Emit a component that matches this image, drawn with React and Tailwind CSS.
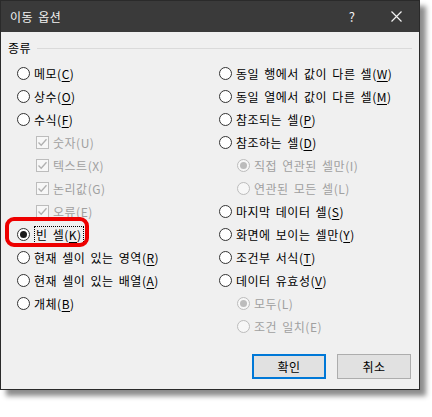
import React from "react";

const FONT = "font-['Noto_Sans_CJK_KR','Noto_Sans',sans-serif] tracking-[0.5px] [word-spacing:2px]";

function Label({ text, k, disabled }) {
  return (
    <span className={`text-[12px] leading-[16px] whitespace-nowrap ${disabled ? "text-[#a0a0a0]" : "text-black"}`}>
      {text}(
      <span className={disabled ? "" : "underline underline-offset-2 decoration-1"}>{k}</span>)
    </span>
  );
}

function Radio({ text, k, checked, disabled, indent, focus }) {
  const border = disabled ? "border-[#bcbcbc]" : "border-[#333333]";
  const bg = disabled ? "bg-[#f7f7f7]" : "bg-white";
  const dot = disabled ? "bg-[#bcbcbc]" : "bg-[#1a1a1a]";
  return (
    <div className={`h-[23px] flex items-center gap-[4px] ${indent ? "pl-[18px]" : ""}`}>
      <div className={`w-[13px] h-[13px] rounded-full border ${border} ${bg} flex items-center justify-center shrink-0`}>
        {checked && <div className={`w-[7px] h-[7px] rounded-full ${dot}`} />}
      </div>
      {focus ? (
        <span className="border border-dotted border-black px-[1px] leading-[14px] flex items-center">
          <Label text={text} k={k} disabled={disabled} />
        </span>
      ) : (
        <Label text={text} k={k} disabled={disabled} />
      )}
    </div>
  );
}

function Check({ text, k }) {
  return (
    <div className="h-[23px] flex items-center gap-[4px] pl-[19px]">
      <div className="w-[13px] h-[13px] border border-[#bcbcbc] bg-[#f7f7f7] flex items-center justify-center shrink-0">
        <svg width="11" height="11" viewBox="0 0 11 11">
          <path d="M1.5 5.5 L4.2 8.3 L9.5 2.2" fill="none" stroke="#b0b0b0" strokeWidth="1.3" />
        </svg>
      </div>
      <Label text={text} k={k} disabled />
    </div>
  );
}

export default function App() {
  return (
    <div className={`w-[432px] h-[417px] bg-white relative ${FONT}`}>
      <div className="w-[420px] h-[390px] border border-[#2a2a2a] bg-[#f0f0f0] flex flex-col shadow-[6px_6px_5px_rgba(0,0,0,0.45)]">
        <div className="h-[31px] bg-[#3a3a3a] flex items-center text-[#f2f2f2] text-[12px] shrink-0">
          <span className="pl-[9px] flex-1">이동 옵션</span>
          <span className="w-[10px] text-[13px] mr-[34px] text-center">?</span>
          <div className="mr-[17px] flex items-center">
            <svg width="11" height="11" viewBox="0 0 11 11">
              <path d="M0.5 0.5 L10.5 10.5 M10.5 0.5 L0.5 10.5" stroke="#f2f2f2" strokeWidth="1.2" />
            </svg>
          </div>
        </div>
        <div className="flex-1 flex flex-col pt-[8px] pl-[7px] pr-[7px]">
          <div className="h-[16px] flex items-center gap-[6px]">
            <span className="text-[12px] leading-[16px] text-black">종류</span>
            <div className="flex-1 h-px bg-[#dadada]" />
          </div>
          <div className="flex mt-[6px] pl-[9px]">
            <div className="w-[202px] flex flex-col relative">
              <Radio text="메모" k="C" />
              <Radio text="상수" k="O" />
              <Radio text="수식" k="F" />
              <Check text="숫자" k="U" />
              <Check text="텍스트" k="X" />
              <Check text="논리값" k="G" />
              <Check text="오류" k="E" />
              <Radio text="빈 셀" k="K" checked focus />
              <Radio text="현재 셀이 있는 영역" k="R" />
              <Radio text="현재 셀이 있는 배열" k="A" />
              <Radio text="개체" k="B" />
              <div className="absolute left-[-12px] top-[155px] w-[84px] h-[30px] border-[4px] border-[#ee0000] rounded-[9px]" />
            </div>
            <div className="flex-1 flex flex-col">
              <Radio text="동일 행에서 값이 다른 셀" k="W" />
              <Radio text="동일 열에서 값이 다른 셀" k="M" />
              <Radio text="참조되는 셀" k="P" />
              <Radio text="참조하는 셀" k="D" />
              <Radio text="직접 연관된 셀만" k="I" checked disabled indent />
              <Radio text="연관된 모든 셀" k="L" disabled indent />
              <Radio text="마지막 데이터 셀" k="S" />
              <Radio text="화면에 보이는 셀만" k="Y" />
              <Radio text="조건부 서식" k="T" />
              <Radio text="데이터 유효성" k="V" />
              <Radio text="모두" k="L" checked disabled indent />
              <Radio text="조건 일치" k="E" disabled indent />
            </div>
          </div>
          <div className="flex justify-end gap-[11px] mt-[16px] pr-[1px]">
            <button className="w-[74px] h-[25px] border-2 border-[#0078d7] bg-[#e1e1e1] text-[12px] text-black flex items-center justify-center">
              확인
            </button>
            <button className="w-[74px] h-[25px] border border-[#adadad] bg-[#e1e1e1] text-[12px] text-black flex items-center justify-center">
              취소
            </button>
          </div>
        </div>
      </div>
    </div>
  );
}
